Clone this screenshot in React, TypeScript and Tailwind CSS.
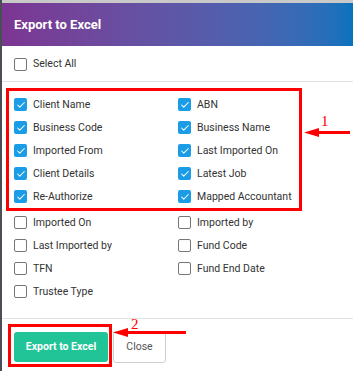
import { Check } from 'lucide-react';

const checkedRows = [
  ['Client Name', 'ABN'],
  ['Business Code', 'Business Name'],
  ['Imported From', 'Last Imported On'],
  ['Client Details', 'Latest Job'],
  ['Re-Authorize', 'Mapped Accountant'],
];

const otherRows = [
  ['Imported On', 'Imported by'],
  ['Last Imported by', 'Fund Code'],
  ['TFN', 'Fund End Date'],
  ['Trustee Type', ''],
];

function Box({ checked }: { checked?: boolean }) {
  if (checked) {
    return (
      <span className="flex h-[13px] w-[13px] shrink-0 items-center justify-center rounded-[2px] bg-[#1a9de6]">
        <Check className="h-[10px] w-[10px] text-white" strokeWidth={2.5} />
      </span>
    );
  }
  return <span className="h-[13px] w-[13px] shrink-0 rounded-[2px] border border-[#767676] bg-white" />;
}

function Item({ label, checked }: { label: string; checked?: boolean }) {
  if (!label) return <div />;
  return (
    <div className="flex h-[23px] items-center gap-[6px]">
      <Box checked={checked} />
      <span className="text-[10.5px] text-[#333]">{label}</span>
    </div>
  );
}

export default function App() {
  return (
    <div className="relative flex h-[371px] w-[353px] overflow-hidden bg-white font-['Roboto',sans-serif]">
      {/* backdrop edge */}
      <div className="w-[2px] shrink-0 bg-[#4b4f55]" />

      <div className="flex flex-1 flex-col">
        <div className="h-[3px] bg-[#c9c9c9]" />

        {/* Header */}
        <div className="flex h-[43px] items-center bg-gradient-to-r from-[#7c3592] to-[#0672bd] pl-[12px]">
          <span className="text-[13px] font-bold text-white">Export to Excel</span>
        </div>

        {/* Select all */}
        <div className="flex h-[36px] items-center gap-[6px] border-b border-[#e3e3e3] pl-[12px] pt-[1px]">
          <Box />
          <span className="text-[10.5px] text-[#333]">Select All</span>
        </div>

        {/* Selected columns */}
        <div className="ml-[4px] mt-[6px] w-[296px] border-[3px] border-[#ff0000] pl-[5px] pt-[2px]">
          <div className="grid grid-cols-[164px_1fr]">
            {checkedRows.map(([a, b]) => (
              <>
                <Item key={a} label={a} checked />
                <Item key={b} label={b} checked />
              </>
            ))}
          </div>
        </div>

        <div className="grid grid-cols-[164px_1fr] pl-[12px]">
          {otherRows.map(([a, b]) => (
            <>
              <Item key={a} label={a} />
              <Item key={b || 'empty'} label={b} />
            </>
          ))}
        </div>

        {/* Footer */}
        <div className="mt-[15px] flex items-start border-t border-[#e3e3e3] pl-[6px] pt-[5px]">
          <div className="border-[3px] border-[#ff0000] pb-[2px] pl-[3px] pr-[1px] pt-[5px]">
            <button className="h-[30px] w-[94px] rounded-[3px] bg-[#20c497] text-[10.5px] font-bold text-white">
              Export to Excel
            </button>
          </div>
          <button className="ml-[1px] mt-[7px] h-[32px] w-[53px] rounded-[3px] border border-[#cfcfcf] bg-white text-[10.5px] text-[#555]">
            Close
          </button>
        </div>
      </div>

      {/* Annotation 1 */}
      <div className="absolute left-[304px] top-[128px] flex items-center">
        <svg width="15" height="9" viewBox="0 0 15 9" className="shrink-0">
          <polygon points="0,4.5 15,0 15,9" fill="#ff0000" />
        </svg>
        <div className="h-[3px] w-[31px] bg-[#ff0000]" />
      </div>
      <span className="absolute left-[321px] top-[114px] font-['Liberation_Serif',serif] text-[15px] leading-none text-[#ff0000]">
        1
      </span>

      {/* Annotation 2 */}
      <div className="absolute left-[113px] top-[328px] flex items-center">
        <svg width="15" height="9" viewBox="0 0 15 9" className="shrink-0">
          <polygon points="0,4.5 15,0 15,9" fill="#ff0000" />
        </svg>
        <div className="h-[3px] w-[58px] bg-[#ff0000]" />
      </div>
      <span className="absolute left-[131px] top-[317px] font-['Liberation_Serif',serif] text-[15px] leading-none text-[#ff0000]">
        2
      </span>
    </div>
  );
}
